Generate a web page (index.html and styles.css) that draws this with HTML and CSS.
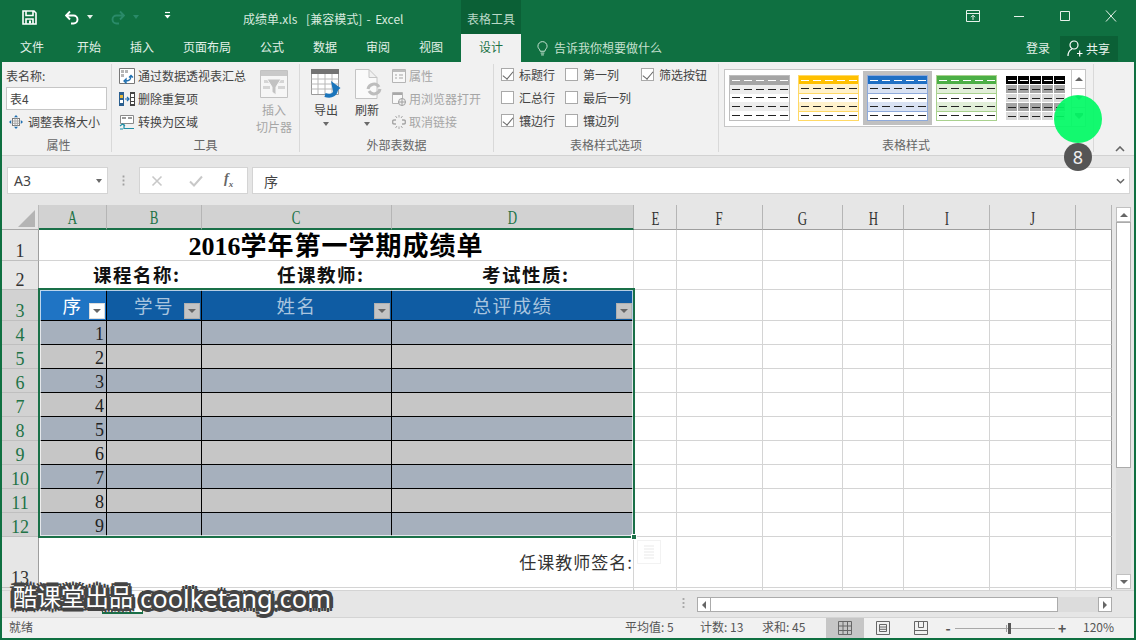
FILE: index.html
```html
<!DOCTYPE html>
<html lang="zh-CN">
<head>
<meta charset="utf-8">
<title>成绩单.xls - Excel</title>
<link rel="stylesheet" href="styles.css">
</head>
<body>
<div class="app">
  <header class="titlebar">
    <div class="qat">
      <svg class="qi save" viewBox="0 0 15 15"><path d="M1 1h11l2 2v11H1z M4 1.5v4h7v-4 M4 14V9h7v5" fill="none" stroke="#fff" stroke-width="1.6"/><rect x="7" y="10.5" width="2" height="3" fill="#fff"/></svg>
      <svg class="qi undo" viewBox="0 0 15 15"><path d="M1.5 5.5h7a4 4 0 0 1 0 8H6 M5 1.5l-4 4 4 4" fill="none" stroke="#fff" stroke-width="1.9"/></svg>
      <span class="caret caret-white c1"></span>
      <svg class="qi redo" viewBox="0 0 15 15"><path d="M13.5 5.5h-7a4 4 0 0 0 0 8H9 M10 1.5l4 4-4 4" fill="none" stroke="#2a8a69" stroke-width="1.9"/></svg>
      <span class="caret caret-dim c2"></span>
      <svg class="qi cust" viewBox="0 0 9 9"><path d="M2 1.5h5" stroke="#fff" stroke-width="1.2"/><path d="M1.5 4h6L4.5 7.5z" fill="#fff"/></svg>
    </div>
    <div class="doc-title">成绩单.xls&nbsp; [兼容模式] - Excel</div>
    <div class="context-tab">表格工具</div>
    <div class="winctl">
      <svg class="wi" viewBox="0 0 14 12"><path d="M.5.5h13v11H.5z M.5 3.5h13 M7 10V5.5 M5 7.2l2-2 2 2" fill="none" stroke="#e6f1ea"/></svg>
      <svg class="wi" viewBox="0 0 14 12"><path d="M2 6.5h10" stroke="#e6f1ea"/></svg>
      <svg class="wi" viewBox="0 0 14 12"><path d="M2.5 1.5h9v9h-9z" fill="none" stroke="#e6f1ea"/></svg>
      <svg class="wi" viewBox="0 0 14 12"><path d="M2 .5l10 11 M12 .5l-10 11" fill="none" stroke="#e6f1ea"/></svg>
    </div>
  </header>

  <nav class="tabs">
    <span class="tab w60">文件</span>
    <span class="tab w54">开始</span>
    <span class="tab w52">插入</span>
    <span class="tab w78">页面布局</span>
    <span class="tab w52">公式</span>
    <span class="tab w54">数据</span>
    <span class="tab w52">审阅</span>
    <span class="tab w54">视图</span>
    <span class="tab tab-active">设计</span>
    <span class="tellme">
      <svg class="bulb" viewBox="0 0 12 16"><path d="M3.5 11C3 8.5 1 8 1 5.500a5 5 0 0 1 10 0C11 8 9 8.500 8.500 11z M4 13h4 M4.500 15h3" fill="none" stroke="#d7ecdf"/></svg>
      告诉我你想要做什么
    </span>
    <span class="login">登录</span>
    <span class="share">
      <svg class="share-ic" viewBox="0 0 16 17"><circle cx="7" cy="5" r="4" fill="none" stroke="#fff" stroke-width="1.200"/><path d="M1 16c0-4 2-6 4-7 M10 13.500h5.500 M12.700 10.500v6" fill="none" stroke="#fff" stroke-width="1.200"/></svg>
      共享
    </span>
  </nav>

  <section class="ribbon">
    <div class="group g1">
      <div class="gbody gbody-col">
        <div class="cmd">表名称:</div>
        <div class="tname">表4</div>
        <div class="cmd resize">
          <svg class="ic14" viewBox="0 0 14 14"><rect x="3.500" y="3.500" width="7" height="7" fill="#fff" stroke="#7a7a7a"/><path d="M3.500 6h7M3.500 8.300h7M6 3.500v7M8.300 3.500v7" stroke="#a8a8a8"/><path d="M7 0l-2 2.200h4zM7 14l-2-2.200h4zM0 7l2.200-2v4zM14 7l-2.200-2v4z" fill="#1f6fb0"/></svg>
          调整表格大小
        </div>
      </div>
      <div class="glabel">属性</div>
    </div>

    <div class="group g2">
      <div class="gbody">
        <div class="cmdcol cmdcol-tools">
          <div class="cmd"><svg class="ic16" viewBox="0 0 16 16"><path d="M.5.500h15v15H.5z" fill="#fff" stroke="#777"/><path d="M2 2h3v3H2z M6 2h3v3H6z M2 6h3v3H2z" fill="#b5b5b5"/><path d="M7 13c3 0 5-1 5-5 M10 9.500l2-2 2 2 M5 13l2-2v4z" fill="none" stroke="#1f6fb0" stroke-width="1.300"/></svg>通过数据透视表汇总</div>
          <div class="cmd"><svg class="ic16" viewBox="0 0 16 16"><path d="M0 1h5v14H0z" fill="#2b5f8f"/><path d="M1 4h3v3H1z" fill="#e8b93a"/><path d="M1 9h3v3H1z" fill="#fff"/><path d="M11 1h5v14h-5z" fill="#444"/><path d="M12 3h3v3h-3z M12 7h3v3h-3z M12 11h3v2h-3z" fill="#fff"/><path d="M6 8h3.500 M8 6l2 2-2 2" fill="none" stroke="#1f6fb0" stroke-width="1.200"/></svg>删除重复项</div>
          <div class="cmd"><svg class="ic16" viewBox="0 0 16 16"><path d="M1.500 1.500h13v8h-13z" fill="#fff" stroke="#8a8a8a"/><path d="M3 3h4v2H3zM9 3h4v2H9z" fill="#9a9a9a"/><path d="M5 10v4.500h10 M1 12l2.500-2L6 12 M1 15h3" fill="none" stroke="#1f8fa8" stroke-width="1.200"/></svg>转换为区域</div>
        </div>
        <div class="bigbtn bigbtn-slicer off">
          <svg class="big-ic" viewBox="0 0 28 28"><path d="M.5.500h27v27H.5z" fill="#f6f6f6" stroke="#c2c2c2"/><path d="M1 1h26v5H1z" fill="#c9c9c9"/><path d="M4 10h20v3H4zM3 16h7v3H3zM18 16h7v3h-7z" fill="#d5d5d5"/><path d="M7 9h14l-5 8v8l-4-3v-5z" fill="#c2c2c2" stroke="#f6f6f6"/></svg>
          <span>插入<br>切片器</span>
        </div>
      </div>
      <div class="glabel">工具</div>
    </div>

    <div class="group g3">
      <div class="gbody">
        <div class="bigbtn bigbtn-export">
          <svg class="big-ic wide" viewBox="0 0 30 30"><path d="M.5 4.500h27v21H.5z" fill="#fff" stroke="#9a9a9a"/><path d="M0 0h28v5H0z" fill="#737373"/><path d="M.5 10h27M.5 15h27M.5 20h27M7 5v20M14 5v20M21 5v20" stroke="#b8b8b8"/><path d="M14 26c7 2 11-1 11-6" fill="none" stroke="#1b75bb" stroke-width="4"/><path d="M20 12l9.500 7-7 6z" fill="#1b75bb"/></svg>
          <span class="dark">导出</span>
          <span class="caret caret-grey"></span>
        </div>
        <div class="bigbtn bigbtn-refresh">
          <svg class="big-ic wide" viewBox="0 0 30 30"><path d="M3.500.500H17l8 8v21H3.500z M17 .500v8h8" fill="#fafafa" stroke="#c4c4c4"/><path d="M16 20a6 6 0 0 1 11-2 M28 20a6 6 0 0 1-11 2" fill="none" stroke="#bdbdbd" stroke-width="3"/></svg>
          <span class="dark">刷新</span>
          <span class="caret caret-grey"></span>
        </div>
        <div class="cmdcol off">
          <div class="cmd"><svg class="ic14" viewBox="0 0 14 14"><path d="M.5.500h13v13H.5z" fill="#f8f8f8" stroke="#b5b5b5"/><path d="M1 1h12v2H1z" fill="#bdbdbd"/><path d="M3 6h2M3 9h2M7 6h4M7 9h4" stroke="#a5a5a5"/></svg>属性</div>
          <div class="cmd"><svg class="ic14" viewBox="0 0 14 14"><path d="M.5.500h10v11H.5z" fill="#f8f8f8" stroke="#b5b5b5"/><path d="M1 1h9v2H1z" fill="#a8a8a8"/><circle cx="10" cy="10" r="3.500" fill="#f1f1f1" stroke="#a0a0a0"/><path d="M6.500 10h7M10 6.500v7" stroke="#a0a0a0"/></svg>用浏览器打开</div>
          <div class="cmd"><svg class="ic14" viewBox="0 0 14 14"><path d="M4 5H2.500a2 2 0 0 0 0 4H4 M10 5h1.500a2 2 0 0 1 0 4H10" fill="none" stroke="#a8a8a8" stroke-width="1.500"/><path d="M5 3L3.500 1M7 2.500V0M9 3l1.500-2M5 11l-1.500 2M7 11.500V14M9 11l1.500 2" stroke="#a8a8a8"/></svg>取消链接</div>
        </div>
      </div>
      <div class="glabel">外部表数据</div>
    </div>

    <div class="group g4">
      <div class="gbody">
        <div class="optcol c64">
          <label class="opt"><span class="box on"></span>标题行</label>
          <label class="opt"><span class="box"></span>汇总行</label>
          <label class="opt"><span class="box on"></span>镶边行</label>
        </div>
        <div class="optcol c76">
          <label class="opt"><span class="box"></span>第一列</label>
          <label class="opt"><span class="box"></span>最后一列</label>
          <label class="opt"><span class="box"></span>镶边列</label>
        </div>
        <div class="optcol">
          <label class="opt"><span class="box on"></span>筛选按钮</label>
        </div>
      </div>
      <div class="glabel">表格样式选项</div>
    </div>

    <div class="group g5">
      <div class="gbody">
        <div class="gallery">
          <div class="thumbs">
            <div class="thumb t-grey"><i class="hd"></i><i></i><i class="bd"></i><i></i><i class="bd"></i></div>
            <div class="thumb t-gold"><i class="hd"></i><i></i><i class="bd"></i><i></i><i class="bd"></i></div>
            <div class="thumb t-blue sel"><i class="hd"></i><i></i><i class="bd"></i><i></i><i class="bd"></i></div>
            <div class="thumb t-green"><i class="hd"></i><i></i><i class="bd"></i><i></i><i class="bd"></i></div>
            <div class="thumb t-black"><i class="hd"></i><i></i><i class="bd"></i><i></i><i class="bd"></i></div>
          </div>
          <div class="gscroll">
            <span class="gs"><b class="tri-up"></b></span>
            <span class="gs"><b class="tri-down"></b></span>
            <span class="gs"><b class="tri-down more"></b></span>
          </div>
        </div>
      </div>
      <div class="glabel">表格样式</div>
    </div>
    <div class="collapse">
      <svg class="chev" viewBox="0 0 10 6"><path d="M1 5l4-4 4 4" fill="none" stroke="#666" stroke-width="1.600"/></svg>
    </div>
  </section>

  <section class="formula">
    <div class="namebox">A3<span class="caret caret-grey"></span></div>
    <div class="fdots"></div>
    <div class="fbtns">
      <svg class="fb" viewBox="0 0 12 12"><path d="M1.500 1.500l9 9M10.500 1.500l-9 9" stroke="#c8c8c8" stroke-width="1.600"/></svg>
      <svg class="fb" viewBox="0 0 14 12"><path d="M1 6.500l4 4 8-9" fill="none" stroke="#c8c8c8" stroke-width="2"/></svg>
      <span class="fx">f<sub>x</sub></span>
    </div>
    <div class="finput">序
      <svg class="fchev" viewBox="0 0 10 6"><path d="M1 1l4 4 4-4" fill="none" stroke="#666" stroke-width="1.600"/></svg>
    </div>
  </section>

  <section class="sheet">
    <div class="gridwrap">
      <table class="grid">
        <colgroup>
          <col class="c-rh"><col class="c-a"><col class="c-b"><col class="c-c"><col class="c-d"><col class="c-e"><col class="c-f"><col class="c-g"><col class="c-h"><col class="c-i"><col class="c-j"><col class="c-k">
        </colgroup>
        <tr class="r-hd">
          <th class="corner"><span class="tri"></span></th>
          <th class="ch sel"><span class="sq">A</span></th><th class="ch sel"><span class="sq">B</span></th><th class="ch sel"><span class="sq">C</span></th><th class="ch sel"><span class="sq">D</span></th>
          <th class="ch"><span class="sq">E</span></th><th class="ch"><span class="sq">F</span></th><th class="ch"><span class="sq">G</span></th><th class="ch"><span class="sq">H</span></th><th class="ch"><span class="sq">I</span></th><th class="ch"><span class="sq">J</span></th><th class="ch"></th>
        </tr>
        <tr class="r1">
          <th class="rh">1</th><td class="title" colspan="4"><span class="num">2016</span>学年第一学期成绩单</td>
          <td></td><td></td><td></td><td></td><td></td><td></td><td></td>
        </tr>
        <tr class="r2">
          <th class="rh">2</th>
          <td class="meta" colspan="4"><div class="metarow"><span>课程名称:</span><span>任课教师:</span><span>考试性质:</span></div></td>
          <td></td><td></td><td></td><td></td><td></td><td></td><td></td>
        </tr>
        <tr class="r3">
          <th class="rh rsel">3</th>
          <td class="th th-a">序<span class="filter fa"></span></td>
          <td class="th">学号<span class="filter"></span></td>
          <td class="th">姓名<span class="filter"></span></td>
          <td class="th">总评成绩<span class="filter"></span></td>
          <td></td><td></td><td></td><td></td><td></td><td></td><td></td>
        </tr>
        <tr class="r-b"><th class="rh rsel">4</th><td class="n">1</td><td></td><td></td><td></td><td></td><td></td><td></td><td></td><td></td><td></td><td></td></tr>
        <tr class="r-g"><th class="rh rsel">5</th><td class="n">2</td><td></td><td></td><td></td><td></td><td></td><td></td><td></td><td></td><td></td><td></td></tr>
        <tr class="r-b"><th class="rh rsel">6</th><td class="n">3</td><td></td><td></td><td></td><td></td><td></td><td></td><td></td><td></td><td></td><td></td></tr>
        <tr class="r-g"><th class="rh rsel">7</th><td class="n">4</td><td></td><td></td><td></td><td></td><td></td><td></td><td></td><td></td><td></td><td></td></tr>
        <tr class="r-b"><th class="rh rsel">8</th><td class="n">5</td><td></td><td></td><td></td><td></td><td></td><td></td><td></td><td></td><td></td><td></td></tr>
        <tr class="r-g"><th class="rh rsel">9</th><td class="n">6</td><td></td><td></td><td></td><td></td><td></td><td></td><td></td><td></td><td></td><td></td></tr>
        <tr class="r-b"><th class="rh rsel">10</th><td class="n">7</td><td></td><td></td><td></td><td></td><td></td><td></td><td></td><td></td><td></td><td></td></tr>
        <tr class="r-g"><th class="rh rsel">11</th><td class="n">8</td><td></td><td></td><td></td><td></td><td></td><td></td><td></td><td></td><td></td><td></td></tr>
        <tr class="r-b"><th class="rh rsel">12</th><td class="n">9</td><td></td><td></td><td></td><td></td><td></td><td></td><td></td><td></td><td></td><td></td></tr>
        <tr class="r13">
          <th class="rh">13</th><td class="sign" colspan="4">任课教师签名:</td>
          <td></td><td></td><td></td><td></td><td></td><td></td><td></td>
        </tr>
        <tr class="r14"><th class="rh"></th><td colspan="4"></td><td></td><td></td><td></td><td></td><td></td><td></td><td></td></tr>
      </table>
      <div class="selection"><span class="handle"></span></div>
      <div class="quick"><svg class="quick-ic" viewBox="0 0 12 14"><path d="M1 1h10M1 4h10M1 7h10M1 10h10M1 13h10" stroke="#eaeaea" stroke-width="1.200"/></svg></div>
    </div>
    <div class="vscroll">
      <span class="sbtn"><b class="tri-up"></b></span>
      <span class="vthumb"></span>
      <span class="vtrack"></span>
      <span class="sbtn"><b class="tri-down"></b></span>
    </div>
  </section>

  <section class="tabbar">
    <div class="sheettab"></div>
    <div class="spacer"></div>
    <div class="grip"></div>
    <div class="hscroll">
      <span class="hbtn"><b class="tri-left"></b></span>
      <span class="hthumb"></span>
      <span class="htrack"></span>
      <span class="hbtn"><b class="tri-right"></b></span>
    </div>
  </section>

  <footer class="status">
    <span class="st-ready">就绪</span>
    <span class="st-avg">平均值: 5</span>
    <span class="st-count">计数: 13</span>
    <span class="st-sum">求和: 45</span>
    <span class="view view-on"><svg class="vi" viewBox="0 0 14 14"><path d="M.5.500h13v13H.5zM.5 5h13M.5 9.500h13M5 .500v13M9.500 .500v13" fill="none" stroke="#666"/></svg></span>
    <span class="view"><svg class="vi" viewBox="0 0 14 14"><path d="M.5.500h13v13H.5z M3.500 3.500h7v7h-7z M3.500 6h7 M3.500 8.300h7" fill="none" stroke="#666"/></svg></span>
    <span class="view"><svg class="vi" viewBox="0 0 14 14"><path d="M.5.500h13v13H.5z M4.500 .500v6h5v-6 M.5 9.500h13" fill="none" stroke="#666"/></svg></span>
    <span class="zoom">
      <b class="zm">-</b>
      <span class="slider"><i class="tick"></i><i class="knob"></i></span>
      <b class="zp">+</b>
    </span>
    <span class="st-pct">120%</span>
  </footer>

  <div class="touch"></div>
  <div class="step">8</div>
  <div class="mark"><span class="mark-cn">酷课堂出品</span><span class="mark-en">coolketang.com</span></div>
</div>
</body>
</html>
```
FILE: styles.css
```css
* { box-sizing: border-box; }
html, body { margin: 0; padding: 0; background: #fff; }
body { font-family: "Noto Sans CJK SC", "Noto Sans", sans-serif; font-size: 12px; color: #444; }
svg { display: block; flex: none; }
i, b { font-style: normal; }

.app {
  position: relative;
  width: 1136px; height: 640px; overflow: hidden;
  display: flex; flex-direction: column;
  background: #e6e6e6;
  border-left: 2px solid #0f7041;
  border-right: 2px solid #0f7041;
  border-bottom: 2px solid #0f7041;
}

/* title bar */
.titlebar { height: 34px; flex: none; display: flex; background: #0f7041; margin: 0 -2px; color: #d6e9de; }
.qat { width: 243px; flex: none; display: flex; align-items: center; padding-left: 22px; height: 34px; }
.qi.save { width: 15px; height: 15px; }
.qi.undo { width: 15px; height: 15px; margin-left: 28px; }
.qi.redo { width: 15px; height: 15px; margin-left: 17px; }
.qi.cust { width: 9px; height: 9px; margin-left: 24px; margin-top: -3px; }
.c1 { margin-left: 7px; }
.c2 { margin-left: 8px; }
.doc-title { width: 218px; flex: none; line-height: 37px; word-spacing: 1.700px; white-space: nowrap; }
.context-tab { width: 60px; flex: none; background: #0b6036; text-align: center; line-height: 37px; color: #b9d8c6; }
.winctl { flex: 1; display: flex; padding-left: 445px; gap: 32px; padding-top: 10px; }
.wi { width: 14px; height: 12px; }

.caret { display: inline-block; width: 0; height: 0; border-left: 3.500px solid transparent; border-right: 3.500px solid transparent; border-top: 4px solid #666; }
.caret-white { border-top-color: #e6f1ea; }
.caret-dim { border-top-color: #2a8a69; }
.caret-grey { border-top-color: #6a6a6a; }

/* tabs */
.tabs { height: 28px; flex: none; display: flex; align-items: stretch; background: #0f7041; color: #e3f0e8; line-height: 26px; margin-right: -2px; }
.tab { display: block; text-align: center; flex: none; }
.w60 { width: 60px; } .w54 { width: 54px; } .w52 { width: 52px; } .w78 { width: 78px; }
.tab-active { width: 60px; margin-left: 3px; background: #f1f1f1; color: #217346; }
.tellme { width: 505px; flex: none; display: flex; align-items: center; padding-left: 16px; gap: 6px; color: #c6e0d0; }
.bulb { width: 11px; height: 15px; }
.login { width: 34px; flex: none; color: #e3f0e8; line-height: 28px; text-align: left; }
.share { width: 58px; height: 25px; margin-top: 2px; flex: none; background: #0b6036; color: #e9f3ed; display: flex; align-items: center; padding-left: 7px; gap: 3px; }
.share-ic { width: 16px; height: 17px; }

/* ribbon */
.ribbon { height: 94px; flex: none; display: flex; background: #f1f1f1; padding-top: 2px; border-bottom: 1px solid #d2d2d2; }
.group { height: 88px; display: flex; flex-direction: column; border-right: 1px solid #d9d9d9; flex: none; }
.g1 { width: 110px; padding-left: 4px; }
.g2 { width: 188px; padding-left: 7px; }
.g3 { width: 194px; padding-left: 4px; }
.g4 { width: 225px; padding-left: 7px; }
.g5 { width: 375px; padding-left: 5px; }
.gbody { height: 72px; flex: none; display: flex; }
.gbody-col { flex-direction: column; }
.glabel { height: 16px; line-height: 18px; text-align: center; color: #666; }
.g2 .glabel { margin-left: -7px; }
.g3 .glabel { margin-left: -4px; }
.g4 .glabel { margin-left: -7px; }
.g5 .glabel { margin-left: -5px; }
.cmd { height: 23px; display: flex; align-items: center; gap: 3px; white-space: nowrap; color: #444; line-height: 23px; }
.tname { width: 101px; height: 23px; background: #fff; border: 1px solid #c6c6c6; padding-left: 3px; line-height: 21px; color: #444; }
.resize { padding-left: 3px; gap: 5px; }
.cmdcol-tools { width: 141px; flex: none; }
.ic16 { width: 16px; height: 16px; }
.ic14 { width: 14px; height: 14px; }
.off, .off .cmd { color: #a6a6a6; }
.dark { color: #444; }
.bigbtn { display: flex; flex-direction: column; align-items: center; flex: none; line-height: 17px; text-align: center; }
.big-ic { width: 28px; height: 28px; margin-top: 6px; margin-bottom: 3px; }
.big-ic.wide { width: 30px; height: 30px; margin-top: 5px; margin-bottom: 2px; }
.bigbtn-slicer { width: 28px; white-space: nowrap; }
.bigbtn-export { width: 44px; }
.bigbtn-refresh { width: 38px; margin-right: 6px; }
.bigbtn .caret { margin-top: 4px; }
.optcol { display: flex; flex-direction: column; }
.c64 { width: 64px; } .c76 { width: 76px; }
.opt { height: 23px; display: flex; align-items: center; gap: 5px; color: #444; margin-top: -1px; margin-bottom: 1px; }
.box { width: 13px; height: 13px; background: #fff; border: 1px solid #a9a9a9; position: relative; flex: none; }
.box.on::after { content: ""; position: absolute; left: 3px; top: 0; width: 5px; height: 9px; border: solid #666; border-width: 0 1.500px 1.500px 0; transform: rotate(40deg); }

.gallery { width: 362px; height: 58px; margin-top: 5px; background: #fff; border: 1px solid #c6c6c6; display: flex; }
.thumbs { width: 346px; flex: none; display: flex; gap: 8px; padding: 5px 0 0 4px; }
.thumb { width: 61px; height: 46px; border: 1px solid; display: flex; flex-direction: column; background: #fff; }
.thumb i {
  display: block; flex: 1;
  background-image: repeating-linear-gradient(90deg, transparent 0 2px, #222 2px 10px, transparent 10px 12px);
  background-size: 100% 1px; background-position: center; background-repeat: no-repeat;
}
.thumb i.hd { background-image: repeating-linear-gradient(90deg, transparent 0 2px, #fff 2px 10px, transparent 10px 12px); }
.t-grey { border-color: #bdbdbd; } .t-grey .hd { background-color: #a5a5a5; } .t-grey i:nth-child(2), .t-grey i:nth-child(4) { background-color: #ededed; }
.t-gold { border-color: #ffd966; } .t-gold .hd { background-color: #ffc000; } .t-gold i:nth-child(2), .t-gold i:nth-child(4) { background-color: #fff2cc; border-bottom: 1px solid #ffd966; }
.t-blue { border-color: #8eaadb; } .t-blue .hd { background-color: #1f6fc4; } .t-blue i:nth-child(2), .t-blue i:nth-child(4) { background-color: #d9e2f3; border-bottom: 1px solid #8eaadb; }
.t-green { border-color: #a9d18e; } .t-green .hd { background-color: #4caf45; } .t-green i:nth-child(2), .t-green i:nth-child(4) { background-color: #e2efd9; border-bottom: 1px solid #a9d18e; }
.t-black { border-color: transparent; gap: 1px; }
.t-black i { background-image: repeating-linear-gradient(90deg, transparent 0 2px, #222 2px 10px, transparent 10px 12px), repeating-linear-gradient(90deg, transparent 0 11px, #fff 11px 12px); background-size: 100% 1px, 100% 100%; }
.t-black i.hd { background-color: #000; background-image: repeating-linear-gradient(90deg, transparent 0 2px, #fff 2px 10px, transparent 10px 12px), repeating-linear-gradient(90deg, transparent 0 11px, #fff 11px 12px); background-size: 100% 1px, 100% 100%; }
.t-black i:nth-child(2), .t-black i:nth-child(4) { background-color: #a5a5a5; }
.t-black .bd { background-color: #d9d9d9; }
.thumb.sel { box-shadow: 0 0 0 4px #c0c0c0; }
.gscroll { flex: 1; display: flex; flex-direction: column; border-left: 1px solid #c6c6c6; }
.gs { flex: 1; display: flex; align-items: center; justify-content: center; border-bottom: 1px solid #c6c6c6; }
.gs:last-child { border-bottom: 0; }
.tri-up, .tri-down, .tri-left, .tri-right { display: block; width: 0; height: 0; }
.tri-up { border-left: 4px solid transparent; border-right: 4px solid transparent; border-bottom: 4px solid #666; }
.tri-down { border-left: 4px solid transparent; border-right: 4px solid transparent; border-top: 4px solid #666; }
.tri-left { border-top: 4px solid transparent; border-bottom: 4px solid transparent; border-right: 4px solid #666; }
.tri-right { border-top: 4px solid transparent; border-bottom: 4px solid transparent; border-left: 4px solid #666; }
.tri-down.more { box-shadow: 0 -2px 0 0 #666; }
.collapse { flex: 1; display: flex; justify-content: flex-end; align-items: flex-end; padding: 0 9px 3px 0; }
.chev { width: 10px; height: 6px; }

/* formula bar */
.formula { height: 49px; flex: none; display: flex; padding: 11px 4px 11px 5px; background: #e6e6e6; }
.namebox { width: 101px; background: #fff; border: 1px solid #d4d4d4; padding-left: 6px; line-height: 25px; font-family: "Noto Sans", sans-serif; font-size: 14px; color: #444; display: flex; justify-content: space-between; align-items: center; padding-right: 5px; }
.fdots { width: 31px; flex: none; background-image: radial-gradient(circle, #a0a0a0 1px, transparent 1.200px); background-size: 3px 4px; background-repeat: repeat-y; background-position: center; margin: 8px 0; }
.fbtns { width: 109px; flex: none; background: #fff; border: 1px solid #d4d4d4; display: flex; align-items: center; padding-left: 11px; gap: 26px; }
.fb { width: 12px; height: 12px; }
.fb + .fb { width: 14px; }
.fx { font-family: "Liberation Serif", serif; font-style: italic; font-size: 14px; font-weight: bold; color: #666; line-height: 1; margin-left: -5px; }
.fx sub { font-size: 9px; }
.finput { flex: 1; margin-left: 4px; background: #fff; border: 1px solid #d4d4d4; padding: 0 4px 0 11px; display: flex; justify-content: space-between; align-items: center; font-size: 14px; color: #444; }
.fchev { width: 9px; height: 6px; }

/* sheet */
.sheet { height: 385px; flex: none; display: flex; background: #e6e6e6; }
.gridwrap { position: relative; width: 1110px; height: 385px; flex: none; overflow: hidden; }
.grid { border-collapse: separate; border-spacing: 0; table-layout: fixed; width: 1110px; background: #fff; font-family: "Liberation Serif", "Noto Sans CJK SC", serif; }
.c-rh { width: 37px; } .c-a { width: 68px; } .c-b { width: 95px; } .c-c { width: 190px; } .c-d { width: 242px; } .c-e { width: 43px; }
.c-f { width: 86px; } .c-g { width: 80px; } .c-h { width: 61px; } .c-i { width: 86px; } .c-j { width: 86px; } .c-k { width: 36px; }
.grid td, .grid th { padding: 0; border-right: 1px solid #d4d4d4; border-bottom: 1px solid #d4d4d4; }
.grid th { font-weight: normal; }
.grid td:last-child { border-right: 1px solid #9a9a9a; }
.r-hd { height: 25px; }
.r1 { height: 31px; } .r2 { height: 29px; } .r3 { height: 31px; }
.r-b, .r-g { height: 24px; }
.r13 { height: 51px; } .r14 { height: 3px; }
.grid th.corner { background: #e6e6e6; border: 0; border-right: 1px solid #bbb; border-bottom: 1px solid #a8a8a8; }
.tri { display: block; width: 0; height: 0; margin: 3px 0 0 16px; border-left: 17px solid transparent; border-bottom: 17px solid #b4b4b4; }
.grid th.ch { background: #e6e6e6; color: #333; border-right: 1px solid #b5b5b5; border-bottom: 1px solid #9e9e9e; font-size: 18px; line-height: 19px; vertical-align: bottom; }
.grid th.ch.sel { background: #d2d2d2; color: #217346; border-bottom: 2px solid #1a7048; }
.sq { display: inline-block; transform: scaleX(.72); }
.grid th.rh { background: #e6e6e6; color: #333; font-size: 18px; line-height: 18px; vertical-align: bottom; border-right: 1px solid #9e9e9e; border-bottom: 1px solid #bfbfbf; }
.grid th.rsel { background: #d2d2d2; color: #217346; }
.grid .title { font-size: 26px; letter-spacing: 1px; font-weight: bold; color: #000; text-align: center; font-family: "Noto Sans CJK SC", serif; line-height: 26px; padding-top: 1px; }
.num { font-family: "Liberation Serif", serif; font-size: 26px; letter-spacing: 0; }
.grid .meta { font-weight: bold; font-size: 18.500px; letter-spacing: 1.500px; color: #111; font-family: "Noto Sans CJK SC", serif; line-height: 22px; padding-bottom: 3px; }
.metarow { display: flex; padding-left: 54px; }
.metarow span:nth-child(1) { width: 184px; }
.metarow span:nth-child(2) { width: 205px; }
.grid .th { position: relative; background: #0f5ca3; color: #a9c5df; font-family: "Noto Sans CJK SC", serif; font-size: 18.500px; letter-spacing: 1.500px; text-align: center; line-height: 26px; padding-bottom: 1px; border-right: 1px solid #000; border-bottom: 1px solid #000; }
.grid .th-a { background: #1f74c4; color: #fff; }
.filter { position: absolute; right: 1px; bottom: 1px; width: 16px; height: 16px; background: #c4c4c4; border: 1px solid #b0b0b0; }
.filter::after { content: ""; position: absolute; left: 3px; top: 5px; border-left: 4px solid transparent; border-right: 4px solid transparent; border-top: 4px solid #666; }
.filter.fa { background: #fff; border-color: #ddd; }
.r-b td:nth-child(-n+5) { background: #a6b0bd; border-right: 1px solid #000; border-bottom: 1px solid #000; }
.r-g td:nth-child(-n+5) { background: #c6c6c6; border-right: 1px solid #000; border-bottom: 1px solid #000; }
.grid .n { text-align: right; font-size: 18px; line-height: 20px; color: #222; vertical-align: bottom; padding-right: 2px; }
.grid .sign { text-align: right; font-size: 17px; letter-spacing: 1px; font-family: "Noto Sans CJK SC", serif; color: #333; line-height: 46px; padding-right: 0; }
.selection { position: absolute; left: 36px; top: 83px; width: 597px; height: 250px; border: 2px solid #1a7048; pointer-events: none; }
.selection::before { content: ""; position: absolute; inset: 0; border: 1px solid rgba(255,255,255,.7); }
.handle { position: absolute; right: -4px; bottom: -4px; background: #1a7048; border: 1px solid #fff; box-sizing: content-box; width: 4px; height: 4px; }
.quick { position: absolute; left: 635px; top: 335px; width: 24px; height: 24px; background: #fff; border: 1px solid #f2f2f2; display: flex; align-items: center; justify-content: center; }
.quick-ic { width: 12px; height: 14px; }

.vscroll { width: 15px; margin: 2px 0 1px 4px; display: flex; flex-direction: column; flex: none; background: #dcdcdc; }
.sbtn { height: 15px; flex: none; background: #fff; border: 1px solid #c0c0c0; display: flex; align-items: center; justify-content: center; }
.vthumb { height: 246px; flex: none; background: #fff; border: 1px solid #ababab; }
.vtrack { flex: 1; }

/* sheet tabs & scroll */
.tabbar { height: 27px; flex: none; display: flex; background: #e6e6e6; border-top: 1px solid #d4d4d4; }
.sheettab { width: 41px; height: 23px; margin-left: 100px; background: #fff; border: solid #1a7048; border-width: 0 1px 2px; flex: none; }
.spacer { width: 527px; flex: none; }
.grip { width: 27px; flex: none; margin: 6px 0 8px; background-image: radial-gradient(circle, #a8a8a8 1px, transparent 1.200px); background-size: 3px 4px; background-repeat: repeat-y; background-position: center; }
.hscroll { width: 415px; height: 15px; margin-top: 6px; display: flex; background: #dcdcdc; flex: none; }
.hbtn { width: 14px; flex: none; background: #fff; border: 1px solid #ababab; display: flex; align-items: center; justify-content: center; }
.hthumb { width: 347px; flex: none; background: #fff; border: 1px solid #ababab; border-left: 0; }
.htrack { flex: 1; }

/* status */
.status { height: 21px; flex: none; display: flex; align-items: center; background: #f1f1f1; border-top: 1px solid #d4d4d4; color: #555; }
.st-ready, .st-avg, .st-count, .st-sum, .st-pct { margin-top: -3px; }
.st-ready { width: 623px; padding-left: 7px; flex: none; }
.st-avg { width: 75px; flex: none; white-space: nowrap; }
.st-count { width: 62px; flex: none; white-space: nowrap; }
.st-sum { width: 64px; flex: none; white-space: nowrap; }
.view { width: 38px; height: 20px; flex: none; display: flex; align-items: center; justify-content: center; }
.view-on { background: #c6c6c6; }
.vi { width: 14px; height: 14px; }
.zoom { width: 143px; flex: none; display: flex; align-items: center; padding-left: 4px; }
.zm, .zp { width: 8px; flex: none; font-size: 14px; color: #555; text-align: center; line-height: 14px; }
.slider { position: relative; width: 100px; flex: none; height: 1px; background: #a8a8a8; margin: 0 3px; }
.tick { position: absolute; left: 51px; top: -3px; width: 1px; height: 7px; background: #a0a0a0; }
.knob { position: absolute; left: 53px; top: -5px; width: 3px; height: 11px; background: #555; }
.st-pct { flex: none; white-space: nowrap; }

/* overlays */
.touch { position: absolute; left: 1052px; top: 95px; width: 48px; height: 48px; border-radius: 50%; background: rgba(0, 250, 100, .92); }
.step { position: absolute; left: 1062px; top: 143px; width: 28px; height: 28px; border-radius: 50%; background: #555; color: #eee; text-align: center; font-family: "Noto Sans", sans-serif; font-size: 18px; line-height: 28px; }
.mark { position: absolute; left: 11px; top: 580px; height: 32px; display: flex; align-items: center; gap: 7px; color: #fff; font-family: "Noto Sans CJK SC", sans-serif; white-space: nowrap;
  text-shadow: 4px 0 0 #444, -4px 0 0 #444, 0 4px 0 #444, 0 -4px 0 #444, 3px 3px 0 #444, -3px 3px 0 #444, 3px -3px 0 #444, -3px -3px 0 #444, 2px 0 0 #444, -2px 0 0 #444, 0 2px 0 #444, 0 -2px 0 #444; }
.mark-cn { font-size: 24px; line-height: 30px; }
.mark-en { font-size: 25.500px; line-height: 30px; font-family: "Noto Sans", sans-serif; margin-top: 4px; }
```
